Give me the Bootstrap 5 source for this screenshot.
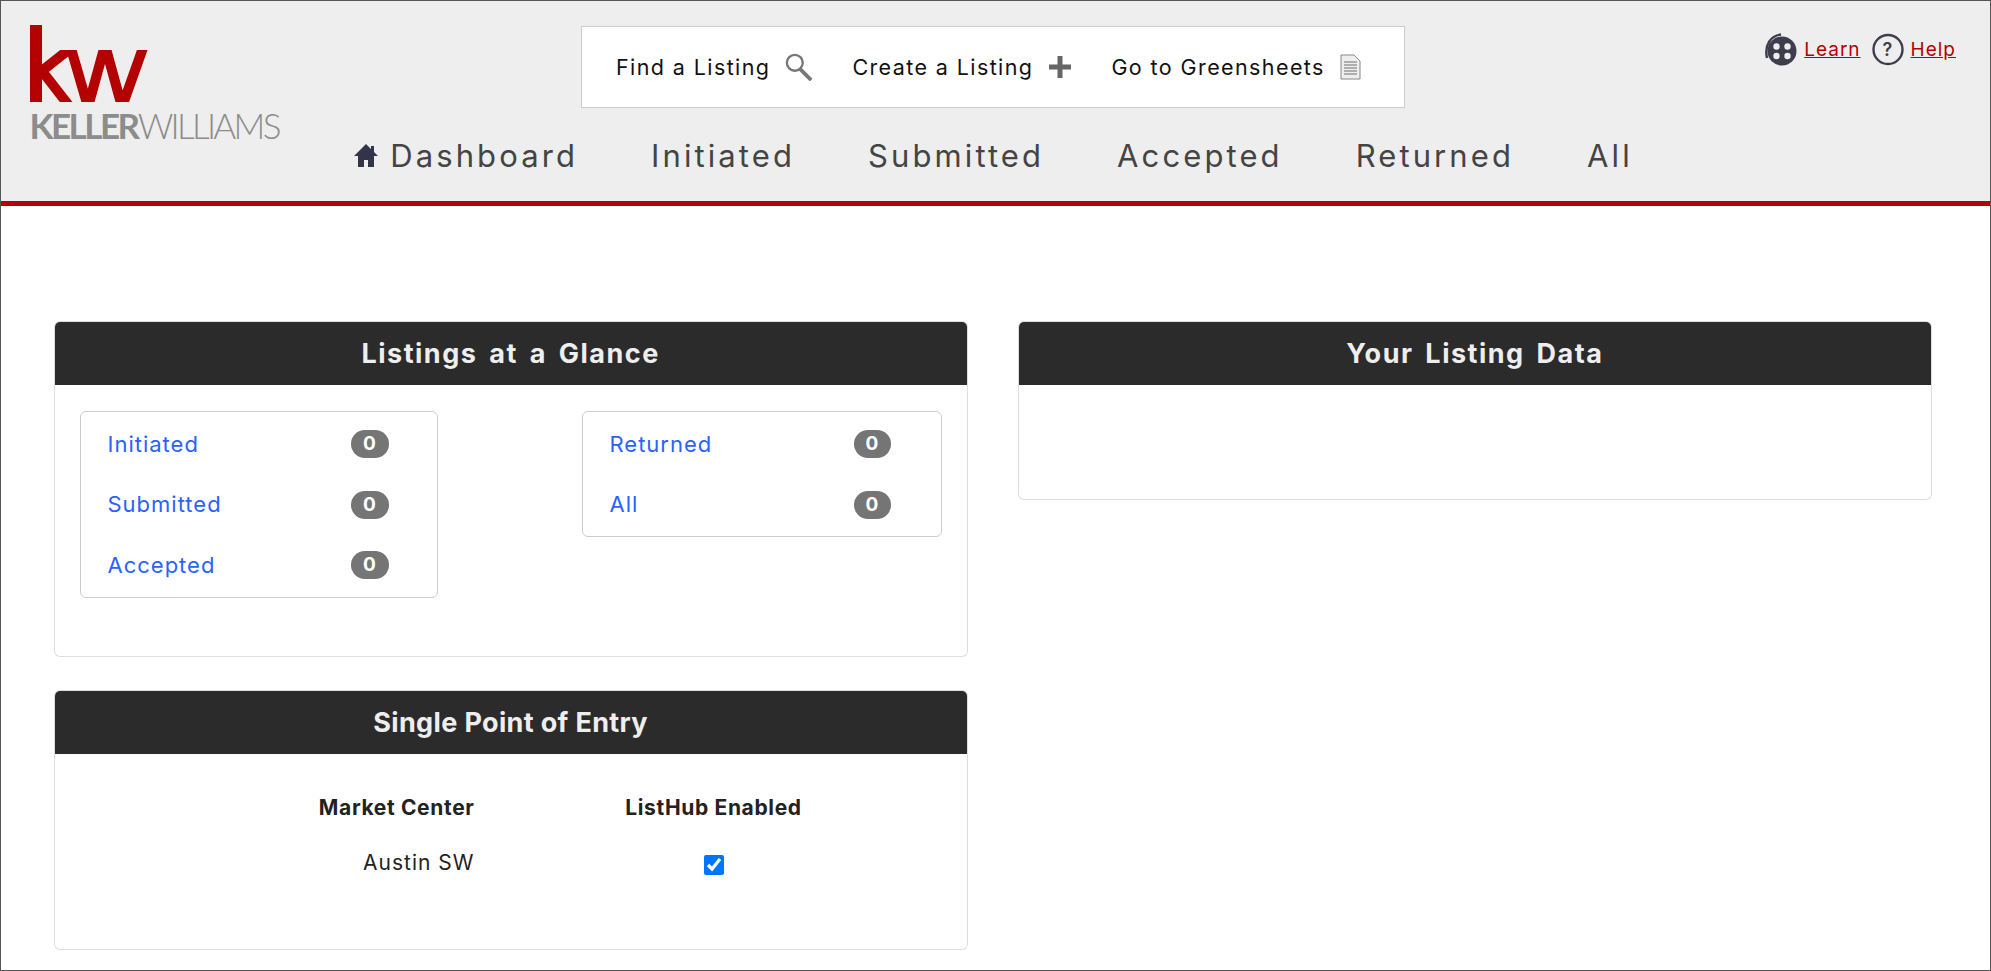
<!DOCTYPE html>
<html lang="en">
<head>
<meta charset="utf-8">
<title>Keller Williams Listings</title>
<link href="https://cdn.jsdelivr.net/npm/bootstrap@5.3.0/dist/css/bootstrap.min.css" rel="stylesheet">
<style>
html,body{height:100%;}
body{font-family:Inter,"Noto Sans",sans-serif;color:#222;background:#fff;overflow:hidden;}
.frame{height:971px;border:1.5px solid #555;overflow:hidden;}
.top-head{display:grid;grid-template-columns:1fr auto 1fr;height:205px;background:#eee;border-bottom:5px solid #b40101;}
.logo-wrap{padding:23.5px 0 0 28.5px;}
.logo-word{display:block;margin-top:5px;font-family:Lato,sans-serif;font-size:35px;line-height:34px;color:#8c8c8c;letter-spacing:-2.7px;font-weight:300;white-space:nowrap;}
.logo-word b{font-weight:700;letter-spacing:-2.5px;}
.center-col{display:flex;flex-direction:column;align-items:center;padding:25px 5px 0 0;}
.quick-box{width:824px;height:82px;background:#fff;border:1.5px solid #ccc;gap:39px;padding:0 0 0 34px;font-size:21.5px;letter-spacing:1.4px;color:#111;}
.quick-box a{color:#111;text-decoration:none;display:flex;align-items:center;gap:15px;white-space:nowrap;}
.main-nav{margin-top:26px;gap:73px;font-size:31px;letter-spacing:3.1px;line-height:44px;}
.main-nav a{color:#444;text-decoration:none;white-space:nowrap;}
.main-nav svg{margin-right:11px;vertical-align:-1px;}
.util{justify-content:flex-end;padding:31.5px 34px 0 0;font-size:19px;letter-spacing:1px;gap:7px;}
.util a{color:#b40101;margin-top:3px;}
.page-body{padding:115px 58px 0 52.5px;}
.grid-row{--bs-gutter-x:50px;}
.panel{border:1.5px solid rgba(0,0,0,.13);border-radius:6px;overflow:hidden;}
.panel-one{height:336px;}
.panel-two{height:260px;margin-top:33px;}
.panel-three{height:179px;}
.panel-title{background:#2b2b2b;color:#eee;height:63px;font-size:27px;font-weight:700;line-height:63px;text-align:center;padding:0;border:0;border-radius:0 !important;letter-spacing:.35px;}
.panel-one .panel-title,.panel-three .panel-title{letter-spacing:1.5px;word-spacing:4px;}
.count-wrap{padding:26px 0 0 25px;align-items:flex-start;}
.count-box{border:1.5px solid #ccc;border-radius:6px;padding:2px 26px 1px 27px;}
.count-a{width:358px;}
.count-b{width:360px;margin-left:144px;}
.count-row{height:60.5px;font-size:22px;letter-spacing:1px;}
.count-row a{color:#2962ff;text-decoration:none;}
.count-pill{background:#757575;color:#fff;border-radius:14px;width:38px;height:28px;font-size:19px;font-weight:700;line-height:28px;text-align:center;letter-spacing:0;}
.count-a .count-pill{margin-right:22px;}
.count-b .count-pill{margin-right:24px;width:37px;}
.entry-table{table-layout:fixed;margin:0;border-collapse:collapse;}
.entry-table th,.entry-table td{padding:0;border:0;font-size:21px;color:#222;vertical-align:middle;}
.entry-table th{font-weight:700;height:55px;letter-spacing:.65px;}
.entry-table td{height:55px;letter-spacing:1px;}
.entry-c1{width:420px;text-align:right;}
.entry-c2{width:478px;text-align:center;}
.entry-pad{padding-top:26.5px;}
.entry-check{width:20px;height:20px;margin-top:13px;}
</style>
</head>
<body>
<div class="frame">
  <header class="top-head">
    <div class="logo-wrap">
      <svg width="122" height="78" viewBox="0 0 122 78" aria-hidden="true" class="d-block">
        <defs><clipPath id="kwclip"><rect x="0" y="25" width="122" height="52"/></clipPath></defs>
        <line x1="6" y1="0" x2="6" y2="77" stroke="#b40101" stroke-width="12"/>
        <g clip-path="url(#kwclip)" fill="none" stroke="#b40101" stroke-width="10">
          <line x1="8" y1="49" x2="42" y2="22"/>
          <line x1="12" y1="46" x2="40" y2="82"/>
          <polyline points="40,20 58,82 75,20 92,82 114,20"/>
        </g>
      </svg>
      <span class="logo-word"><b>KELLER</b>WILLIAMS</span>
    </div>
    <div class="center-col">
      <nav class="quick-box d-flex align-items-center">
        <a href="#">Find a Listing
          <svg width="28" height="28" viewBox="0 0 30 30" aria-hidden="true"><circle cx="10.5" cy="10.5" r="8.5" fill="none" stroke="#777" stroke-width="2.5"/><line x1="16" y1="17" x2="28" y2="29" stroke="#777" stroke-width="4"/></svg>
        </a>
        <a href="#">Create a Listing
          <svg width="24" height="24" viewBox="0 0 24 24" aria-hidden="true"><path d="M9.5 1h5v8.5H23v5h-8.5V23h-5v-8.5H1v-5h8.5z" fill="#666"/></svg>
        </a>
        <a href="#">Go to Greensheets
          <svg width="21" height="26" viewBox="0 0 21 26" aria-hidden="true"><path d="M1 1h13l6 6v18H1z" fill="#eee" stroke="#888"/><path d="M4 8h13M4 11h13M4 14h13M4 17h13M4 20h13" stroke="#999" stroke-width="1.6"/></svg>
        </a>
      </nav>
      <nav class="main-nav d-flex">
        <a href="#"><svg width="26" height="25" viewBox="0 0 26 25" aria-hidden="true"><path d="M13 1 1 13h4v11h6v-7h4v7h6V13h4l-4-4V3h-3v3z" fill="#33334a"/></svg>Dashboard</a>
        <a href="#">Initiated</a>
        <a href="#">Submitted</a>
        <a href="#">Accepted</a>
        <a href="#">Returned</a>
        <a href="#">All</a>
      </nav>
    </div>
    <div class="util d-flex align-items-start">
      <svg width="33" height="33" viewBox="0 0 33 33" aria-hidden="true"><path d="M17 1.500C7 2.500 0 12 3 25" fill="none" stroke="#3d3d4d" stroke-width="2.400"/><circle cx="18" cy="18" r="14.500" fill="#3d3d4d"/><circle cx="12.500" cy="13.500" r="3.200" fill="#eee"/><circle cx="23.500" cy="13.500" r="3.200" fill="#eee"/><circle cx="12.500" cy="23" r="3.200" fill="#eee"/><circle cx="23.500" cy="23" r="3.200" fill="#eee"/></svg>
      <a href="#">Learn</a>
      <svg class="ms-1" width="32" height="33" viewBox="0 0 32 33" aria-hidden="true"><circle cx="16" cy="16.500" r="14.500" fill="none" stroke="#3d3d4d" stroke-width="2.400"/><text x="16" y="23" text-anchor="middle" font-size="18" font-weight="600" font-family="Inter,sans-serif" fill="#3d3d4d">?</text></svg>
      <a href="#">Help</a>
    </div>
  </header>
  <main class="page-body">
    <div class="row grid-row">
      <div class="col-6">
        <section class="card panel panel-one">
          <h2 class="card-header panel-title">Listings at a Glance</h2>
          <div class="d-flex count-wrap">
            <div class="count-box count-a">
              <div class="count-row d-flex justify-content-between align-items-center"><a href="#">Initiated</a><span class="count-pill">0</span></div>
              <div class="count-row d-flex justify-content-between align-items-center"><a href="#">Submitted</a><span class="count-pill">0</span></div>
              <div class="count-row d-flex justify-content-between align-items-center"><a href="#">Accepted</a><span class="count-pill">0</span></div>
            </div>
            <div class="count-box count-b">
              <div class="count-row d-flex justify-content-between align-items-center"><a href="#">Returned</a><span class="count-pill">0</span></div>
              <div class="count-row d-flex justify-content-between align-items-center"><a href="#">All</a><span class="count-pill">0</span></div>
            </div>
          </div>
        </section>
        <section class="card panel panel-two">
          <h2 class="card-header panel-title">Single Point of Entry</h2>
          <div class="entry-pad">
            <table class="entry-table">
              <thead><tr><th class="entry-c1">Market Center</th><th class="entry-c2">ListHub Enabled</th></tr></thead>
              <tbody><tr><td class="entry-c1">Austin SW</td><td class="entry-c2"><input class="entry-check" type="checkbox" checked aria-label="ListHub Enabled"></td></tr></tbody>
            </table>
          </div>
        </section>
      </div>
      <div class="col-6">
        <section class="card panel panel-three">
          <h2 class="card-header panel-title">Your Listing Data</h2>
        </section>
      </div>
    </div>
  </main>
</div>
<script src="https://cdn.jsdelivr.net/npm/bootstrap@5.3.0/dist/js/bootstrap.bundle.min.js"></script>
</body>
</html>
